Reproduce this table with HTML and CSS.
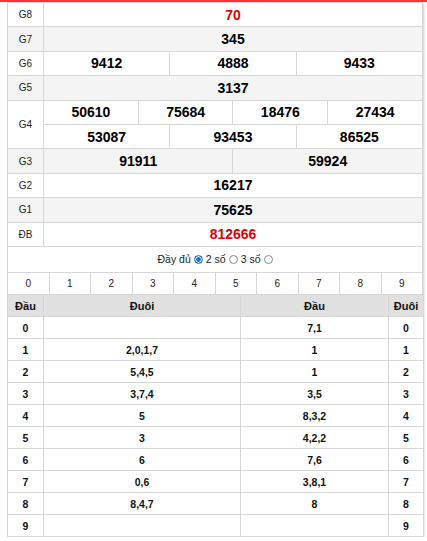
FILE: index.html
```html
<!DOCTYPE html>
<html lang="vi">
<head>
<meta charset="utf-8">
<title>KQ</title>
<link rel="stylesheet" href="styles.css">
</head>
<body>
<div class="topbar"></div>
<div class="box">
  <table class="kq">
    <colgroup>
      <col class="c-lbl">
      <col span="12">
    </colgroup>
    <tr><td class="lbl">G8</td><td colspan="12" class="num red">70</td></tr>
    <tr class="alt"><td class="lbl">G7</td><td colspan="12" class="num">345</td></tr>
    <tr><td class="lbl">G6</td><td colspan="4" class="num">9412</td><td colspan="4" class="num">4888</td><td colspan="4" class="num">9433</td></tr>
    <tr class="alt"><td class="lbl">G5</td><td colspan="12" class="num">3137</td></tr>
    <tr><td class="lbl" rowspan="2">G4</td><td colspan="3" class="num">50610</td><td colspan="3" class="num">75684</td><td colspan="3" class="num">18476</td><td colspan="3" class="num">27434</td></tr>
    <tr><td colspan="4" class="num">53087</td><td colspan="4" class="num">93453</td><td colspan="4" class="num">86525</td></tr>
    <tr class="alt"><td class="lbl">G3</td><td colspan="6" class="num">91911</td><td colspan="6" class="num">59924</td></tr>
    <tr><td class="lbl">G2</td><td colspan="12" class="num">16217</td></tr>
    <tr class="alt"><td class="lbl">G1</td><td colspan="12" class="num">75625</td></tr>
    <tr><td class="lbl">ĐB</td><td colspan="12" class="num red">812666</td></tr>
  </table>

  <div class="opts">
    <label class="opt">Đầy đủ <input type="radio" name="mode" checked></label>
    <label class="opt">2 số <input type="radio" name="mode"></label>
    <label class="opt">3 số <input type="radio" name="mode"></label>
  </div>

  <table class="digits">
    <tr><td>0</td><td>1</td><td>2</td><td>3</td><td>4</td><td>5</td><td>6</td><td>7</td><td>8</td><td>9</td></tr>
  </table>

  <table class="loto">
    <colgroup>
      <col class="l1"><col class="l2"><col class="l3"><col class="l4">
    </colgroup>
    <tr class="head"><th>Đầu</th><th>Đuôi</th><th>Đầu</th><th>Đuôi</th></tr>
    <tr><td>0</td><td></td><td>7,1</td><td>0</td></tr>
    <tr><td>1</td><td>2,0,1,7</td><td>1</td><td>1</td></tr>
    <tr><td>2</td><td>5,4,5</td><td>1</td><td>2</td></tr>
    <tr><td>3</td><td>3,7,4</td><td>3,5</td><td>3</td></tr>
    <tr><td>4</td><td>5</td><td>8,3,2</td><td>4</td></tr>
    <tr><td>5</td><td>3</td><td>4,2,2</td><td>5</td></tr>
    <tr><td>6</td><td>6</td><td>7,6</td><td>6</td></tr>
    <tr><td>7</td><td>0,6</td><td>3,8,1</td><td>7</td></tr>
    <tr><td>8</td><td>8,4,7</td><td>8</td><td>8</td></tr>
    <tr><td>9</td><td></td><td></td><td>9</td></tr>
  </table>
</div>
</body>
</html>
```

FILE: styles.css
```css
* { box-sizing: border-box; }

body {
  margin: 0;
  background: #fff;
  color: #000;
  font-family: "Liberation Sans", Arial, sans-serif;
}

.topbar {
  height: 2px;
  background: #f4343c;
}

.box {
  margin-left: 7px;
  width: 416px;
  box-shadow: 1px 1px 2px rgba(0, 0, 0, 0.2);
  background: #fff;
}

table {
  width: 100%;
  border-collapse: collapse;
  table-layout: fixed;
}

td, th {
  border: 1px solid #d6d6d6;
  text-align: center;
  vertical-align: middle;
  padding: 0;
}

/* results table */
.kq .c-lbl { width: 36px; }
.kq tr { height: 24.4px; }
.kq .alt { background: #f4f4f4; }

.lbl {
  font-size: 10px;
  color: #222;
}

.num {
  font-size: 14px;
  font-weight: bold;
  color: #000;
}

.num.red { color: #e30000; }

/* options row */
.opts {
  height: 25px;
  border-left: 1px solid #d6d6d6;
  border-right: 1px solid #d6d6d6;
  display: flex;
  align-items: center;
  justify-content: center;
  gap: 3px;
  font-size: 10.5px;
  color: #222;
}

.opt {
  display: flex;
  align-items: center;
  gap: 3px;
}

.opt input {
  appearance: none;
  -webkit-appearance: none;
  margin: 0;
  width: 9px;
  height: 9px;
  border: 1px solid #8a8a8a;
  border-radius: 50%;
  background: #fff;
}

.opt input:checked {
  border-color: #1a6fe0;
  background: radial-gradient(circle, #1a6fe0 0 2px, #fff 2.6px 3px, #1a6fe0 3.5px);
}

/* digits row */
.digits tr { height: 22px; }
.digits td {
  font-size: 10px;
  color: #222;
}

/* loto table */
.loto .l1 { width: 36px; }
.loto .l2 { width: 197px; }
.loto .l3 { width: 148px; }
.loto .l4 { width: 35px; }

.loto tr { height: 22px; }
.loto tr:first-child th { border-top: 0; }

.loto th {
  background: #e0e0e0;
  font-size: 11px;
  font-weight: bold;
  color: #111;
}

.loto td {
  font-size: 10.5px;
  font-weight: bold;
  color: #111;
}
```
